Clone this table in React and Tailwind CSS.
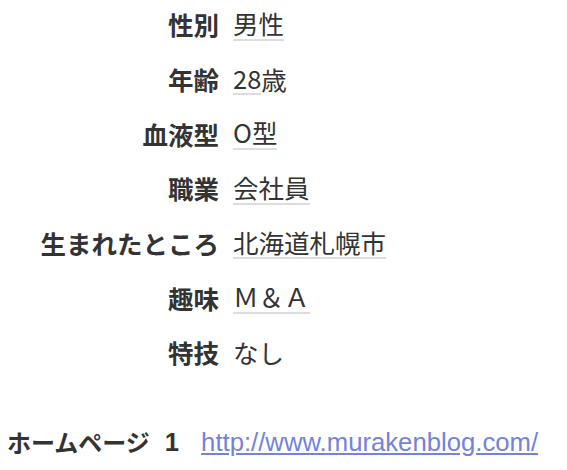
const ROWS = [
  { label: "性別", value: "男性" },
  { label: "年齢", value: "28", rest: "歳" },
  { label: "血液型", value: "O型" },
  { label: "職業", value: "会社員" },
  { label: "生まれたところ", value: "北海道札幌市" },
  { label: "趣味", value: "Ｍ＆Ａ" },
  { label: "特技", value: "なし", plain: true },
];

export default function App() {
  return (
    <main className="w-[567px] h-[470px] bg-white text-[#333] font-['Noto_Sans_CJK_JP',sans-serif] overflow-hidden">
      <div className="grid grid-cols-[219px_auto] gap-x-[14px] -mt-[3px]">
        {ROWS.map((row) => (
          <div key={row.label} className="contents">
            <div className="h-[54.7px] flex items-center justify-end text-[25.5px] font-bold whitespace-nowrap">
              {row.label}
            </div>
            <div className="h-[54.7px] flex items-center text-[25.5px] whitespace-nowrap">
              <span className={row.plain ? "" : "border-b-2 border-[#ddd] leading-[1.2]"}>{row.value}</span>
              {row.rest && <span className="leading-[1.2]">{row.rest}</span>}
            </div>
          </div>
        ))}
      </div>

      <div className="flex items-center mt-[43px] pl-[7px] leading-normal">
        <strong className="flex items-center font-bold whitespace-nowrap">
          <span className="text-[24px]">ホームページ</span>
          <span className="ml-[15px] text-[25.7px] font-['Liberation_Sans',sans-serif]">1</span>
        </strong>
        <a
          href="http://www.murakenblog.com/"
          className="ml-[22px] text-[25.7px] text-[#7382dc] underline font-['Liberation_Sans',sans-serif]"
        >
          http://www.murakenblog.com/
        </a>
      </div>
    </main>
  );
}
